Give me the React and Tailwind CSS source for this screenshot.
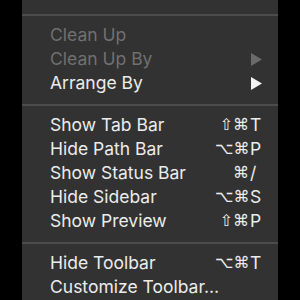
const sections = [
  [{ label: "as Cover Flow", mod: "⌘", key: "4" }],
  [
    { label: "Clean Up", disabled: true },
    { label: "Clean Up By", disabled: true, submenu: true },
    { label: "Arrange By", submenu: true },
  ],
  [
    { label: "Show Tab Bar", mod: "⇧⌘", key: "T" },
    { label: "Hide Path Bar", mod: "⌥⌘", key: "P" },
    { label: "Show Status Bar", mod: "⌘", key: "/" },
    { label: "Hide Sidebar", mod: "⌥⌘", key: "S" },
    { label: "Show Preview", mod: "⇧⌘", key: "P" },
  ],
  [
    { label: "Hide Toolbar", mod: "⌥⌘", key: "T" },
    { label: "Customize Toolbar…" },
  ],
];

export default function App() {
  return (
    <div className="h-[300px] w-[300px] overflow-hidden bg-black">
      <div className="ml-[22px] h-full w-[256px] overflow-hidden bg-[#323232] font-['Inter','DejaVu_Sans',sans-serif]">
        <div className="-mt-[19px]">
          {sections.map((items, i) => (
            <div key={i}>
              {i > 0 && (
                <div className="pb-[7px] pt-[9px]">
                  <div className="h-[2px] bg-[#4c4c4c]" />
                </div>
              )}
              {items.map((item) => (
                <MenuRow key={item.label} item={item} />
              ))}
            </div>
          ))}
        </div>
      </div>
    </div>
  );
}

function MenuRow({ item }) {
  const color = item.disabled ? "text-[#707070]" : "text-[#ececec]";
  return (
    <div className={`flex h-6 items-center pl-[28px] pr-[13px] text-[17.5px] leading-none ${color}`}>
      <span className="flex-1 whitespace-nowrap">{item.label}</span>
      {item.submenu && (
        <svg width="11" height="13" viewBox="0 0 11 13" className="mr-[3px]">
          <polygon points="0,0 11,6.5 0,13" fill={item.disabled ? "#6a6a6a" : "#f4f4f4"} />
        </svg>
      )}
      {item.key && (
        <span className="flex items-center">
          <span className="w-[34px] whitespace-nowrap text-right font-['DejaVu_Sans',sans-serif] text-[16px]">{item.mod}</span>
          <span className="w-[16px] pl-px">{item.key}</span>
        </span>
      )}
    </div>
  );
}
